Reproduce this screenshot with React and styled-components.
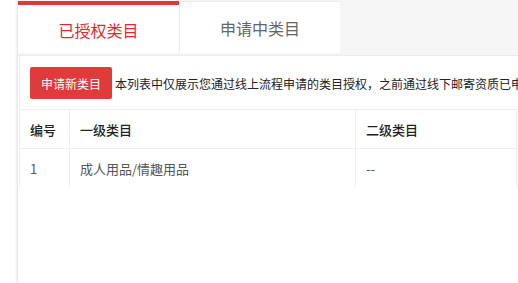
import React, { useState } from 'react';
import styled, { createGlobalStyle } from 'styled-components';

const GlobalStyle = createGlobalStyle`
  html, body {
    margin: 0;
    padding: 0;
    background: #fff;
    overflow: hidden;
  }
  body {
    font-family: "Microsoft YaHei", "Noto Sans CJK SC", "Noto Sans", sans-serif;
  }
`;

const Page = styled.div`
  margin-left: 18px;
  min-height: 100vh;
  width: 900px;
  box-shadow: -1px 0 3px rgba(0, 0, 0, 0.14);
`;

const TabBar = styled.div`
  display: flex;
  align-items: flex-start;
  height: 54px;
  padding-top: 1px;
  background: #f5f5f5;
  border-bottom: 1px solid #ebebeb;
`;

const Tab = styled.div`
  width: 161px;
  height: 52px;
  box-sizing: border-box;
  display: flex;
  align-items: center;
  justify-content: center;
  background: #fff;
  font-size: 16px;
  cursor: pointer;
  color: ${p => (p.$active ? '#e0292f' : '#666')};
  border-top: ${p => (p.$active ? '4px solid #e0383a' : '1px solid #eeeeee')};
  border-left: ${p => (p.$active ? 'none' : '1px solid #ececec')};
  padding-top: ${p => (p.$active ? '2px' : '0')};
`;

const Panel = styled.div`
  margin-left: 1px;
  border-left: 1px solid #eeeeee;
  background: #fff;
`;

const Toolbar = styled.div`
  display: flex;
  align-items: center;
  gap: 3px;
  padding: 11px 10px 10px 10px;
  border-bottom: 1px solid #eeeeee;
  white-space: nowrap;
`;

const Button = styled.button`
  height: 32px;
  padding: 0 11px;
  border: none;
  border-radius: 2px;
  background: #e03a3a;
  color: #fff;
  font-family: inherit;
  font-size: 12px;
  cursor: pointer;
`;

const Notice = styled.span`
  font-size: 12px;
  color: #222;
`;

const Table = styled.table`
  border-collapse: separate;
  border-spacing: 0;
  table-layout: fixed;
`;

const Th = styled.th`
  height: 38px;
  padding: 0 10px;
  text-align: left;
  font-size: 13px;
  font-weight: 500;
  color: #222;
  border-bottom: 1px solid #eeeeee;
  border-right: 1px solid #eeeeee;
`;

const Td = styled.td`
  height: 38px;
  padding: 0 10px;
  font-size: 13px;
  color: #555;
  border-right: 1px solid #eeeeee;
`;

const columns = [
  { key: 'no', title: '编号', width: 50 },
  { key: 'first', title: '一级类目', width: 286 },
  { key: 'second', title: '二级类目', width: 161 }
];

const rows = [{ no: '1', first: '成人用品/情趣用品', second: '--' }];

const tableWidth = columns.reduce((sum, c) => sum + c.width, 0);

const App = () => {
  const [tab, setTab] = useState(0);
  return (
    <Page>
      <GlobalStyle />
      <TabBar>
        <Tab $active={tab === 0} onClick={() => setTab(0)}>
          已授权类目
        </Tab>
        <Tab $active={tab === 1} onClick={() => setTab(1)}>
          申请中类目
        </Tab>
      </TabBar>
      <Panel>
        <Toolbar>
          <Button>申请新类目</Button>
          <Notice>
            本列表中仅展示您通过线上流程申请的类目授权，之前通过线下邮寄资质已申请的类目授权请联系客服查询。
          </Notice>
        </Toolbar>
        <Table style={{ width: tableWidth }}>
          <colgroup>
            {columns.map(c => (
              <col key={c.key} style={{ width: c.width }} />
            ))}
          </colgroup>
          <thead>
            <tr>
              {columns.map(c => (
                <Th key={c.key}>{c.title}</Th>
              ))}
            </tr>
          </thead>
          <tbody>
            {rows.map(r => (
              <tr key={r.no}>
                {columns.map(c => (
                  <Td key={c.key}>{r[c.key]}</Td>
                ))}
              </tr>
            ))}
          </tbody>
        </Table>
      </Panel>
    </Page>
  );
};

export default App;
